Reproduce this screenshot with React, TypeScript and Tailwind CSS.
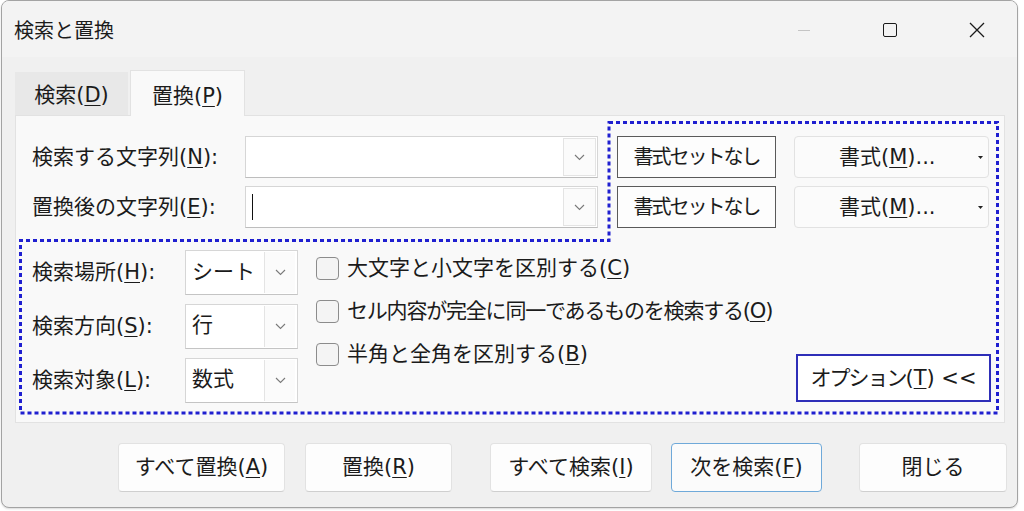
import React from "react";

const FONT = "'DejaVu Sans', 'Noto Sans CJK JP', sans-serif";

function U({ c }: { c: string }) {
  return <span className="underline decoration-1 underline-offset-[3px]">{c}</span>;
}

function Chevron() {
  return (
    <svg width="11" height="7" viewBox="0 0 11 7" className="block">
      <polyline points="1,1 5.5,5.5 10,1" fill="none" stroke="#7a7a7a" strokeWidth="1.1" />
    </svg>
  );
}

function ComboText({ cursor }: { cursor?: boolean }) {
  return (
    <div className="w-[353px] h-[42px] bg-white border border-[#d6d6d6] border-b-[#bdbdbd] flex items-stretch">
      <div className="flex-1 flex items-center pl-[6px]">
        {cursor && <div className="w-[1px] h-[26px] bg-[#111]" />}
      </div>
      <div className="w-[33px] my-[1px] mr-[1px] border border-[#e4e4e4] bg-[#fbfbfb] flex items-center justify-center">
        <Chevron />
      </div>
    </div>
  );
}

function Select({ value }: { value: string }) {
  return (
    <div className="w-[113px] h-[45px] bg-white border border-[#d6d6d6] border-b-[#c4c4c4] flex items-stretch">
      <div className="flex-1 flex items-center pl-[6px] text-[21px]">{value}</div>
      <div className="w-[31px] my-[1px] mr-[2px] border-l border-[#e4e4e4] bg-[#fbfbfb] flex items-center justify-center">
        <Chevron />
      </div>
    </div>
  );
}

function Checkbox({ children, tight }: { children: React.ReactNode; tight?: boolean }) {
  return (
    <div className="h-[43px] flex items-center">
      <div className="w-[23px] h-[23px] rounded-[4px] border border-[#8c8c8c] bg-[#f4f4f4]" />
      <div className={`ml-[8px] text-[21px] leading-none whitespace-nowrap ${tight ? "tracking-[-1.2px]" : ""}`}>{children}</div>
    </div>
  );
}

function BottomButton({ w, ml, children, def }: { w: string; ml: string; children: React.ReactNode; def?: boolean }) {
  return (
    <div
      className={`${w} ${ml} h-[49px] rounded-[4px] flex items-center justify-center text-[21px] leading-none ${
        def ? "bg-[#fbfbfb] border border-[#6fa9d9]" : "bg-[#fdfdfd] border border-[#e2e2e2] border-b-[#cfcfcf]"
      }`}
    >
      {children}
    </div>
  );
}

function FormatPair() {
  return (
    <>
      <div className="ml-[19px] w-[159px] h-[42px] bg-[#fdfdfd] border border-[#5a5a5a] flex items-center justify-center text-[20px] leading-none tracking-[-2px]">
        書式セットなし
      </div>
      <div className="ml-[18px] w-[195px] h-[42px] bg-[#fbfbfb] border border-[#e2e2e2] rounded-[4px] flex items-center text-[21px] leading-none">
        <span className="ml-[44px]">
          書式(<U c="M" />)...
        </span>
        <svg width="5" height="3" viewBox="0 0 5 3" className="ml-auto mr-[5px]">
          <polygon points="0,0 5,0 2.5,3" fill="#222" />
        </svg>
      </div>
    </>
  );
}

export default function App() {
  return (
    <div className="w-[1024px] h-[511px] bg-white relative overflow-hidden text-[#1b1b1b]" style={{ fontFamily: FONT }}>
      <div className="ml-[1px] w-[1017px] h-[508px] rounded-[8px] border border-[#a3a3a3] bg-[#f0f0f0] flex flex-col overflow-hidden shadow-[0_1px_2px_rgba(0,0,0,0.15)]">
        {/* Title bar */}
        <div className="h-[56px] bg-[#f3f3f3] flex items-center pl-[12px]">
          <div className="text-[20px] leading-none pt-[4px]">検索と置換</div>
          <div className="ml-auto flex items-center pt-[2px]">
            <div className="w-[12px] h-[1px] bg-[#c4c4c4]" />
            <div className="ml-[73px] w-[14px] h-[14px] border-[1.3px] border-[#1a1a1a] rounded-[2px]" />
            <svg width="16" height="16" viewBox="0 0 16 16" className="ml-[72px] mr-[32px]">
              <path d="M1 1 L15 15 M15 1 L1 15" stroke="#1a1a1a" strokeWidth="1.3" />
            </svg>
          </div>
        </div>

        {/* Body */}
        <div className="flex-1 pl-[13px] pt-[13px]">
          {/* Tabs */}
          <div className="h-[45px] flex items-end">
            <div className="w-[113px] h-[43px] bg-[#e8e8e8] flex items-center justify-center text-[21px] leading-none pt-[4px]">
              <span>
                検索(<U c="D" />)
              </span>
            </div>
            <div className="ml-[2px] w-[115px] h-[46px] bg-[#f9f9f9] border-t border-x border-[#e2e2e2] flex items-center justify-center text-[21px] leading-none relative z-10 -mb-[1px] pt-[5px]">
              <span>
                置換(<U c="P" />)
              </span>
            </div>
          </div>

          {/* Panel */}
          <div className="w-[990px] h-[308px] bg-[#f9f9f9] border border-[#e2e2e2] pl-[16px] pt-[20px]">
            <div className="h-[42px] flex items-center">
              <div className="w-[213px] text-[21px] leading-none">
                検索する文字列(<U c="N" />):
              </div>
              <ComboText />
              <FormatPair />
            </div>
            <div className="mt-[8px] h-[42px] flex items-center">
              <div className="w-[213px] text-[21px] leading-none">
                置換後の文字列(<U c="E" />):
              </div>
              <ComboText cursor />
              <FormatPair />
            </div>

            <div className="mt-[19px] flex">
              <div className="pt-[3px] flex flex-col gap-[8px]">
                <div className="h-[45px] flex items-center">
                  <div className="w-[153px] text-[21px] leading-none">
                    検索場所(<U c="H" />):
                  </div>
                  <Select value="シート" />
                </div>
                <div className="h-[46px] flex items-center">
                  <div className="w-[153px] text-[21px] leading-none">
                    検索方向(<U c="S" />):
                  </div>
                  <Select value="行" />
                </div>
                <div className="h-[46px] flex items-center">
                  <div className="w-[153px] text-[21px] leading-none">
                    検索対象(<U c="L" />):
                  </div>
                  <Select value="数式" />
                </div>
              </div>
              <div className="ml-[18px] flex flex-col">
                <Checkbox>
                  大文字と小文字を区別する(<U c="C" />)
                </Checkbox>
                <Checkbox tight>
                  セル内容が完全に同一であるものを検索する(<U c="O" />)
                </Checkbox>
                <Checkbox>
                  半角と全角を区別する(<U c="B" />)
                </Checkbox>
              </div>
              <div className="ml-auto mr-[13px] self-end mb-[1px] w-[195px] h-[48px] border-2 border-[#2e2eb8] bg-white flex items-center justify-center text-[21px] leading-none whitespace-nowrap">
                <span className="tracking-[-2px]">オプション</span>(<U c="T" />) &lt;&lt;
              </div>
            </div>
          </div>

          {/* Bottom buttons */}
          <div className="mt-[20px] flex">
            <BottomButton w="w-[167px]" ml="ml-[103px]">
              すべて置換(<U c="A" />)
            </BottomButton>
            <BottomButton w="w-[147px]" ml="ml-[20px]">
              置換(<U c="R" />)
            </BottomButton>
            <BottomButton w="w-[162px]" ml="ml-[38px]">
              すべて検索(<U c="I" />)
            </BottomButton>
            <BottomButton w="w-[151px]" ml="ml-[19px]" def>
              次を検索(<U c="F" />)
            </BottomButton>
            <BottomButton w="w-[148px]" ml="ml-[37px]">
              閉じる
            </BottomButton>
          </div>
        </div>
      </div>

      {/* Dotted annotation outline */}
      <svg className="absolute left-0 top-0 pointer-events-none" width="1024" height="511" viewBox="0 0 1024 511">
        <path
          d="M609 122.5 H997.5 V413 H20.5 V240.5 H609 Z"
          fill="none"
          stroke="#1f1fd0"
          strokeWidth="3"
          strokeDasharray="4 3"
        />
      </svg>
    </div>
  );
}
